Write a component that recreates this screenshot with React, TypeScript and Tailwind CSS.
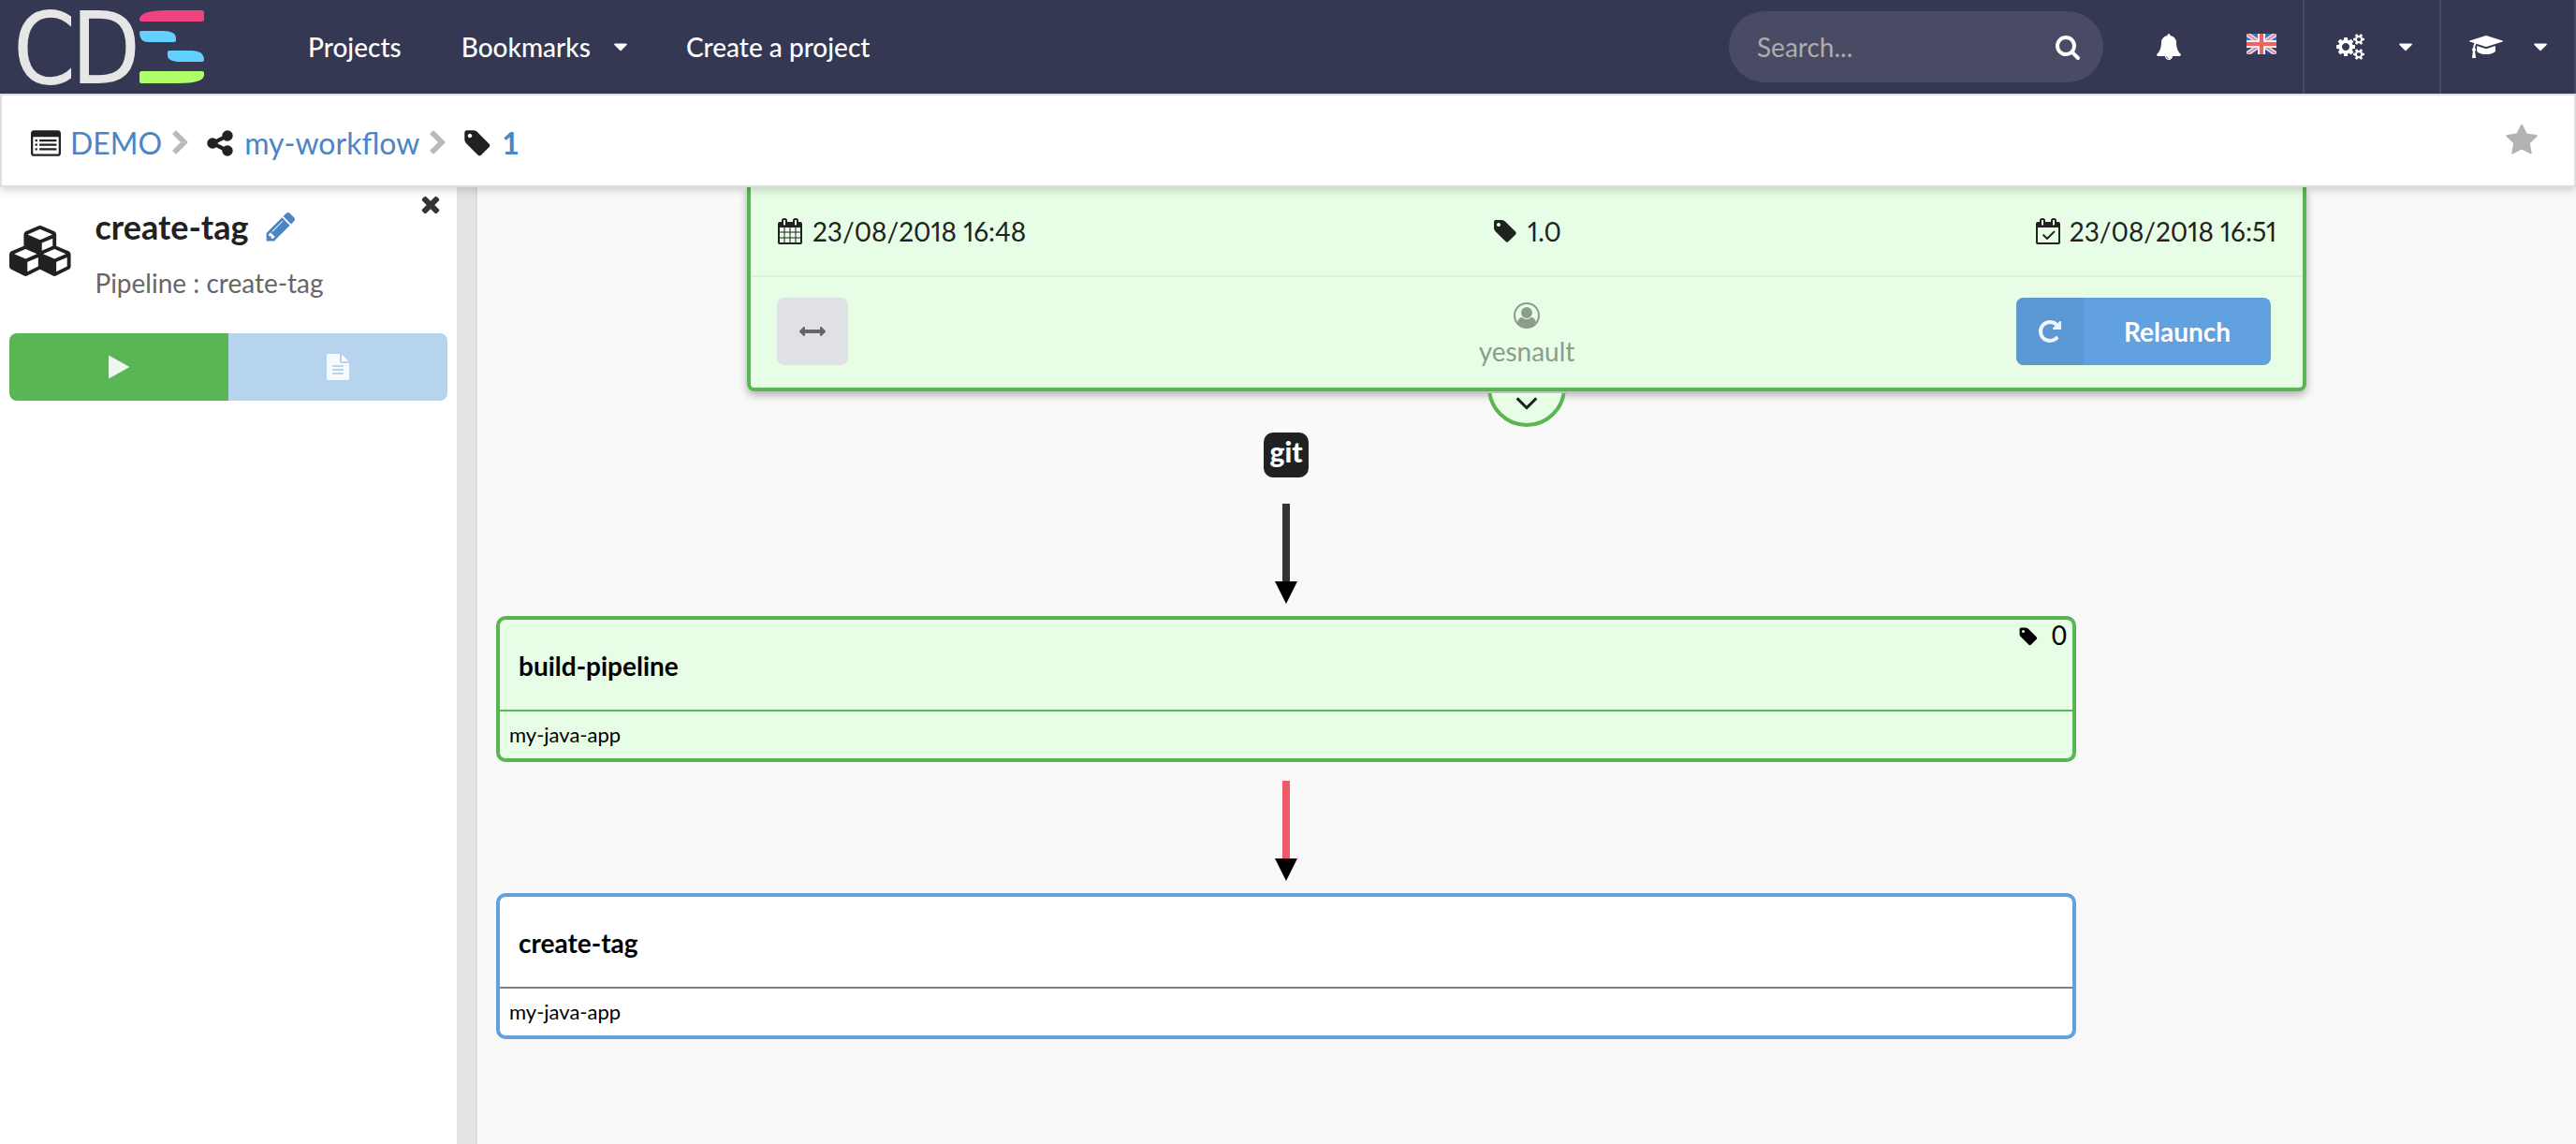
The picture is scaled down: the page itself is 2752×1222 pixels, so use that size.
import React from 'react';

const paths = {
  bell: 'M912 1696q0-16-16-16-59 0-101.5-42.5t-42.5-101.5q0-16-16-16t-16 16q0 73 51.5 124.5t124.5 51.5q16 0 16-16zm816-288q0 52-38 90t-90 38h-448q0 106-75 181t-181 75-181-75-75-181h-448q-52 0-90-38t-38-90q50-42 91-88t85-119.5 74.5-158.5 50-206 19.5-260q0-152 117-282.5t307-158.5q-8-19-8-39 0-40 28-68t68-28 68 28 28 68q0 20-8 39 190 28 307 158.5t117 282.5q0 139 19.5 260t50 206 74.5 158.5 85 119.5 91 88z',
  search: 'M1216 832q0-185-131.5-316.5t-316.5-131.5-316.5 131.5-131.5 316.5 131.5 316.5 316.5 131.5 316.5-131.5 131.5-316.5zm512 832q0 52-38 90t-90 38q-54 0-90-38l-343-342q-179 124-399 124-143 0-273.5-55.5t-225-150-150-225-55.5-273.5 55.5-273.5 150-225 225-150 273.5-55.5 273.5 55.5 225 150 150 225 55.5 273.5q0 220-124 399l343 343q37 37 37 90z',
  caret: 'M1408 704q0 26-19 45l-448 448q-19 19-45 19t-45-19l-448-448q-19-19-19-45t19-45 45-19h896q26 0 45 19t19 45z',
  cogs: 'M896 896q0-106-75-181t-181-75-181 75-75 181 75 181 181 75 181-75 75-181zm768 512q0-52-38-90t-90-38-90 38-38 90q0 53 37.5 90.5t90.5 37.5 90.5-37.5 37.5-90.5zm0-1024q0-52-38-90t-90-38-90 38-38 90q0 53 37.5 90.5t90.5 37.5 90.5-37.5 37.5-90.5zm-384 421v185q0 10-7 19.5t-16 10.5l-155 24q-11 35-32 76 34 48 90 115 7 11 7 20 0 12-7 19-23 30-82.5 89.5t-78.5 59.5q-11 0-21-7l-115-90q-37 19-77 31-11 108-23 155-7 24-30 24h-186q-11 0-20-7.5t-10-17.5l-23-153q-34-10-75-31l-118 89q-7 7-20 7-11 0-21-8-144-133-144-160 0-9 7-19 10-14 41-53t47-61q-23-44-35-82l-152-24q-10-1-17-9.5t-7-19.5v-185q0-10 7-19.5t16-10.5l155-24q11-35 32-76-34-48-90-115-7-11-7-20 0-12 7-20 22-30 82-89t79-59q11 0 21 7l115 90q34-18 77-32 11-108 23-154 7-24 30-24h186q11 0 20 7.5t10 17.5l23 153q34 10 75 31l118-89q8-7 20-7 11 0 21 8 144 133 144 160 0 8-7 19-12 16-42 54t-45 60q23 48 34 82l152 23q10 2 17 10.5t7 19.5zm640 533v140q0 16-149 31-12 27-30 52 51 113 51 138 0 4-4 7-122 71-124 71-8 0-46-47t-52-68q-20 2-30 2t-30-2q-14 21-52 68t-46 47q-2 0-124-71-4-3-4-7 0-25 51-138-18-25-30-52-149-15-149-31v-140q0-16 149-31 13-29 30-52-51-113-51-138 0-4 4-7 4-2 35-20t59-34 30-16q8 0 46 46.5t52 67.5q20-2 30-2t30 2q51-71 92-112l6-2q4 0 124 70 4 3 4 7 0 25-51 138 17 23 30 52 149 15 149 31zm0-1024v140q0 16-149 31-12 27-30 52 51 113 51 138 0 4-4 7-122 71-124 71-8 0-46-47t-52-68q-20 2-30 2t-30-2q-14 21-52 68t-46 47q-2 0-124-71-4-3-4-7 0-25 51-138-18-25-30-52-149-15-149-31v-140q0-16 149-31 13-29 30-52-51-113-51-138 0-4 4-7 4-2 35-20t59-34 30-16q8 0 46 46.5t52 67.5q20-2 30-2t30 2q51-71 92-112l6-2q4 0 124 70 4 3 4 7 0 25-51 138 17 23 30 52 149 15 149 31z',
  cap: 'M1774 836l18 316q4 69-82 128t-235 93.5-323 34.5-323-34.5-235-93.5-82-128l18-316 574 181q22 7 48 7t48-7zm530-324q0 23-22 31l-1120 352q-4 1-10 1t-10-1l-652-206q-43 34-71 111.5t-34 178.5q63 36 63 109 0 69-58 107l58 433q2 14-8 25-9 11-24 11h-192q-15 0-24-11-10-11-8-25l58-433q-58-38-58-107 0-73 65-111 11-207 98-330l-333-104q-22-8-22-31t22-31l1120-352q4-1 10-1t10 1l1120 352q22 8 22 31z',
  star: 'M1728 647q0 22-26 48l-363 354 86 500q1 7 1 20 0 21-10.5 35.5t-30.5 14.5q-19 0-40-12l-449-236-449 236q-22 12-40 12-21 0-31.5-14.5t-10.5-35.5q0-6 2-20l86-500-364-354q-25-27-25-48 0-37 56-46l502-73 225-455q19-41 49-41t49 41l225 455 502 73q56 9 56 46z',
  listAlt: 'M160 128h1472q66 0 113 47t47 113v1216q0 66-47 113t-113 47h-1472q-66 0-113-47t-47-113v-1216q0-66 47-113t113-47zm0 384q-32 0-32 32v960q0 32 32 32h1472q32 0 32-32v-960q0-32-32-32zM256 672h128v128h-128zm0 256h128v128h-128zm0 256h128v128h-128zM512 672h1024v128h-1024zm0 256h1024v128h-1024zm0 256h1024v128h-1024z',
  chevron: 'M1363 877l-742 742q-19 19-45 19t-45-19l-166-166q-19-19-19-45t19-45l531-531-531-531q-19-19-19-45t19-45l166-166q19-19 45-19t45 19l742 742q19 19 19 45t-19 45z',
  share: 'M1344 1024q133 0 226.5 93.5t93.5 226.5-93.5 226.5-226.5 93.5-226.5-93.5-93.5-226.5q0-12 2-34l-360-180q-92 86-218 86-133 0-226.5-93.5t-93.5-226.5 93.5-226.5 226.5-93.5q126 0 218 86l360-180q-2-22-2-34 0-133 93.5-226.5t226.5-93.5 226.5 93.5 93.5 226.5-93.5 226.5-226.5 93.5q-126 0-218-86l-360 180q2 22 2 34t-2 34l360 180q92-86 218-86z',
  tag: 'M576 448q0-53-37.5-90.5t-90.5-37.5-90.5 37.5-37.5 90.5 37.5 90.5 90.5 37.5 90.5-37.5 37.5-90.5zm1067 576q0 53-37 90l-491 492q-39 37-91 37-53 0-90-37l-715-716q-38-37-64.5-101t-26.5-117v-416q0-52 38-90t90-38h416q53 0 117 26.5t102 64.5l715 714q37 39 37 91z',
  cubes: 'M640 1632l384-192v-314l-384 164v342zm-64-454l404-173-404-173-404 173zm1088 454l384-192v-314l-384 164v342zm-64-454l404-173-404-173-404 173zm-448-293l384-165v-266l-384 164v267zm-64-379l441-189-441-189-441 189zm1088 518v416q0 36-19 67t-52 47l-448 224q-25 14-57 14t-57-14l-448-224q-4-2-7-4-2 2-7 4l-448 224q-25 14-57 14t-57-14l-448-224q-33-16-52-47t-19-67v-416q0-38 21.5-70t56.5-48l434-186v-400q0-38 21.5-70t56.5-48l448-192q23-10 50-10t50 10l448 192q35 16 56.5 48t21.5 70v400l434 186q36 16 57 48t21 70z',
  pencil: 'M491 1536l91-91-235-235-91 91v107h128v128h107zm523-928q0-22-22-22-10 0-17 7l-542 542q-7 7-7 17 0 22 22 22 10 0 17-7l542-542q7-7 7-17zm-54-192l416 416-832 832h-416v-416zm683 96q0 53-37 90l-166 166-416-416 166-165q36-38 90-38 53 0 91 38l235 234q37 39 37 91z',
  close: 'M1490 1322q0 40-28 68l-136 136q-28 28-68 28t-68-28l-294-294-294 294q-28 28-68 28t-68-28l-136-136q-28-28-28-68t28-68l294-294-294-294q-28-28-28-68t28-68l136-136q28-28 68-28t68 28l294 294 294-294q28-28 68-28t68 28l136 136q28 28 28 68t-28 68l-294 294 294 294q28 28 28 68z',
  play: 'M1576 927l-1328 738q-23 13-39.5 3t-16.5-36v-1472q0-26 16.5-36t39.5 3l1328 738q23 13 23 31t-23 31z',
  file: 'M1596 476q14 14 28 36h-472v-472q22 14 36 28zm-476 164h544v1056q0 40-28 68t-68 28h-1344q-40 0-68-28t-28-68v-1600q0-40 28-68t68-28h800v544q0 40 28 68t68 28zm160 736v-64q0-14-9-23t-23-9h-704q-14 0-23 9t-9 23v64q0 14 9 23t23 9h704q14 0 23-9t9-23zm0-256v-64q0-14-9-23t-23-9h-704q-14 0-23 9t-9 23v64q0 14 9 23t23 9h704q14 0 23-9t9-23zm0-256v-64q0-14-9-23t-23-9h-704q-14 0-23 9t-9 23v64q0 14 9 23t23 9h704q14 0 23-9t9-23z',
  calendar: 'M192 1664h288v-288h-288v288zm352 0h320v-288h-320v288zm-352-352h288v-320h-288v320zm352 0h320v-320h-320v320zm-352-384h288v-288h-288v288zm736 736h320v-288h-320v288zm-384-736h320v-288h-320v288zm768 736h288v-288h-288v288zm-384-352h320v-320h-320v320zm-352-864v-288q0-13-9.5-22.5t-22.5-9.5h-64q-13 0-22.5 9.5t-9.5 22.5v288q0 13 9.5 22.5t22.5 9.5h64q13 0 22.5-9.5t9.5-22.5zm736 864h288v-320h-288v320zm-384-384h320v-288h-320v288zm384 0h288v-288h-288v288zm32-480v-288q0-13-9.5-22.5t-22.5-9.5h-64q-13 0-22.5 9.5t-9.5 22.5v288q0 13 9.5 22.5t22.5 9.5h64q13 0 22.5-9.5t9.5-22.5zm384-64v1280q0 52-38 90t-90 38h-1408q-52 0-90-38t-38-90v-1280q0-52 38-90t90-38h128v-96q0-66 47-113t113-47h64q66 0 113 47t47 113v96h384v-96q0-66 47-113t113-47h64q66 0 113 47t47 113v96h128q52 0 90 38t38 90z',
  calendarCheck: 'M1303 964l-512 512q-10 9-23 9t-23-9l-288-288q-9-10-9-23t9-22l46-46q9-9 22-9t23 9l220 220 444-444q10-9 23-9t22 9l46 46q9 9 9 22t-9 23zm-1175 700h1408v-1024h-1408v1024zm384-1216v-288q0-14-9-23t-23-9h-64q-14 0-23 9t-9 23v288q0 14 9 23t23 9h64q14 0 23-9t9-23zm768 0v-288q0-14-9-23t-23-9h-64q-14 0-23 9t-9 23v288q0 14 9 23t23 9h64q14 0 23-9t9-23zm384-64v1280q0 52-38 90t-90 38h-1408q-52 0-90-38t-38-90v-1280q0-52 38-90t90-38h128v-96q0-66 47-113t113-47h64q66 0 113 47t47 113v96h384v-96q0-66 47-113t113-47h64q66 0 113 47t47 113v96h128q52 0 90 38t38 90z',
  repeat: 'M1664 256v448q0 26-19 45t-45 19h-448q-42 0-59-40-17-39 14-69l138-138q-148-137-349-137-104 0-198.5 40.5t-163.5 109.5-109.5 163.5-40.5 198.5 40.5 198.5 109.5 163.5 163.5 109.5 198.5 40.5q119 0 225-52t179-147q7-10 23-12 15 0 25 9l137 138q9 8 9.5 20.5t-7.5 22.5q-109 132-264 204.5t-327 72.5q-156 0-298-61t-245-164-164-245-61-298 61-298 164-245 245-164 298-61q147 0 284.5 55.5t244.5 156.5l130-129q29-31 70-14 39 17 39 59z',
  arrows: 'M1792 896q0 26-19 45l-256 256q-19 19-45 19t-45-19-19-45v-128h-1024v128q0 26-19 45t-45 19-45-19l-256-256q-19-19-19-45t19-45l256-256q19-19 45-19t45 19 19 45v128h1024v-128q0-26 19-45t45-19 45 19l256 256q19 19 19 45z',
  user: 'M896 0q182 0 348 71t286 191 191 286 71 348q0 181-70.5 347t-190.5 286-286 191.5-349 71.5-349-71-285.5-191.5-190.5-286-71-347.5 71-348 191-286 286-191 348-71zm619 1351q149-205 149-455 0-156-61-298t-164-245-245-164-298-61-298 61-245 164-164 245-61 298q0 250 149 455 66-327 306-327 131 128 313 128t313-128q240 0 306 327zm-235-647q0-159-112.5-271.5t-271.5-112.5-271.5 112.5-112.5 271.5 112.5 271.5 271.5 112.5 271.5-112.5 112.5-271.5z',
  angleDown: 'M1395 736q0 13-10 23l-466 466q-10 10-23 10t-23-10l-466-466q-10-10-10-23t10-23l50-50q10-10 23-10t23 10l393 393 393-393q10-10 23-10t23 10l50 50q10 10 10 23z',
};

type IconName = keyof typeof paths;

function Icon({ name, width = 1792, className = 'h-7' }: { name: IconName; width?: number; className?: string }) {
  return (
    <svg
      viewBox={`0 0 ${width} 1792`}
      fill="currentColor"
      fillRule={name === 'listAlt' ? 'evenodd' : 'nonzero'}
      className={`shrink-0 overflow-visible ${className}`}
      aria-hidden="true"
    >
      <path d={paths[name]} />
    </svg>
  );
}

function Logo() {
  return (
    <svg viewBox="0 0 220 100" className="h-[100px] w-[220px] overflow-visible" role="img" aria-label="CDS">
      <g fill="#e6e6e6" fontFamily="'DejaVu Sans Condensed', 'DejaVu Sans', sans-serif" fontSize="107">
        <text x="14" y="89">C</text>
        <text x="76" y="89">D</text>
      </g>
      <path d="M149 21q0-10 29-10h38q2 0 2 2v8q0 2-2 2h-65q-2 0-2-2z" fill="#ef427f" />
      <path d="M149 35q0-2 2-2h23q14 0 14 8v2q0 2-2 2h-27q-10 0-10-10z" fill="#63d0ff" />
      <path d="M179 56q0-2 2-2h23q14 0 14 10q0 2-2 2h-23q-14 0-14-7z" fill="#63d0ff" />
      <path d="M149 79q0-3 2-3h65q2 0 2 2v2q0 9-28 9h-39q-2 0-2-2z" fill="#aeff68" />
    </svg>
  );
}

function Flag() {
  return (
    <svg viewBox="0 0 32 22" className="h-[22px] w-8" aria-hidden="true">
      <rect width="32" height="22" fill="#4a6fb8" />
      <rect y="11" width="32" height="11" fill="#2c4691" />
      <path d="M0 0L32 22M32 0L0 22" stroke="#e6e6f2" strokeWidth="5" />
      <path d="M0 0L32 22M32 0L0 22" stroke="#e58a8f" strokeWidth="2" />
      <path d="M16 0V22M0 11H32" stroke="#fbeeee" strokeWidth="8" />
      <path d="M16 0V22M0 11H32" stroke="#ec6360" strokeWidth="4" />
    </svg>
  );
}

function Header() {
  return (
    <header className="flex h-[100px] items-center bg-[#343852] text-[28px] leading-9 text-white">
      <a href="#home"><Logo /></a>
      <nav className="ml-[109px] flex items-center font-medium">
        <a href="#projects">Projects</a>
        <button type="button" className="ml-16 flex items-center gap-5">
          Bookmarks <Icon name="caret" className="h-6" />
        </button>
        <a href="#create" className="ml-[58px]">Create a project</a>
      </nav>
      <div className="ml-auto flex h-full items-center">
        <form className="flex h-[76px] w-[400px] items-center rounded-full bg-[#484b63] pr-6 pl-[30px]" onSubmit={(e) => e.preventDefault()}>
          <input
            type="text"
            aria-label="Search"
            placeholder="Search..."
            className="min-w-0 flex-1 bg-transparent leading-9 outline-none placeholder:text-[#adadad]"
          />
          <button type="submit" aria-label="Search"><Icon name="search" /></button>
        </form>
        <button type="button" aria-label="Notifications" className="ml-14"><Icon name="bell" /></button>
        <button type="button" aria-label="Language" className="mr-7 mb-1.5 ml-[69px]"><Flag /></button>
        <button type="button" aria-label="Settings" className="flex h-full w-[146px] items-center justify-between border-l-2 border-[#484b63] pr-6 pl-[34px]">
          <Icon name="cogs" width={1920} /> <Icon name="caret" className="h-6" />
        </button>
        <button type="button" aria-label="Help" className="flex h-full w-[146px] items-center justify-between border-x-2 border-[#484b63] pr-6 pl-[30px]">
          <Icon name="cap" width={2304} /> <Icon name="caret" className="h-6" />
        </button>
      </div>
    </header>
  );
}

function Breadcrumb() {
  return (
    <div className="relative z-10 flex h-[100px] items-center border-2 border-[#dedede] bg-white pr-[38px] pl-[31px] text-[32px] leading-10 text-[#4c84c4] shadow-[0_4px_8px_rgba(0,0,0,0.15)]">
      <nav aria-label="Breadcrumb" className="flex items-center pt-1.5">
        <Icon name="listAlt" className="h-8 text-[#212121]" />
        <a href="#demo" className="ml-2.5">DEMO</a>
        <Icon name="chevron" className="mx-1.5 h-7 text-[#b9b9b9]" />
        <Icon name="share" className="ml-1.5 h-8 text-[#212121]" />
        <a href="#workflow" className="ml-2.5">my-workflow</a>
        <Icon name="chevron" className="mx-1.5 h-7 text-[#b9b9b9]" />
        <Icon name="tag" className="ml-1.5 h-8 text-[#212121]" />
        <a href="#run" className="ml-2.5 font-bold">1</a>
      </nav>
      <button type="button" aria-label="Add to favourites" className="ml-auto text-[#b3b3b3]"><Icon name="star" className="h-9" /></button>
    </div>
  );
}

function Sidebar() {
  return (
    <aside className="relative w-[488px] shrink-0 bg-white px-2.5 pt-[22px]">
      <button type="button" aria-label="Close" className="absolute top-1 right-3.5 text-[#333]"><Icon name="close" className="h-7" /></button>
      <div className="flex items-center">
        <Icon name="cubes" width={2304} className="mb-2 h-[54px]" />
        <div className="ml-[22px]">
          <h2 className="flex items-center gap-4 text-[36px] leading-10 font-bold text-[#212121]">
            create-tag
            <button type="button" aria-label="Edit" className="text-[#4c84c4]"><Icon name="pencil" className="h-9" /></button>
          </h2>
          <p className="mt-5 text-[28px] leading-10 text-[#666]">Pipeline : create-tag</p>
        </div>
      </div>
      <div className="mt-[34px] flex h-[72px] overflow-hidden rounded-lg text-white">
        <button type="button" aria-label="Run" className="flex flex-1 items-center justify-center bg-[#5ab655] text-white/90"><Icon name="play" /></button>
        <button type="button" aria-label="Logs" className="flex flex-1 items-center justify-center bg-[#b7d4ee] text-white/90"><Icon name="file" /></button>
      </div>
    </aside>
  );
}

function RunCard() {
  return (
    <section className="relative mx-72 rounded-b-lg border-4 border-t-0 border-[#5ab655] bg-[#e8fde5] text-[28px] leading-9 text-[#212121] shadow-[0_4px_10px_rgba(0,0,0,0.3)]">
      <div className="grid h-24 grid-cols-3 items-center border-b-2 border-[#dcf0da] px-7 proportional-nums">
        <span className="flex items-center gap-2.5"><Icon name="calendar" /> 23/08/2018 16:48</span>
        <span className="flex items-center justify-center gap-2.5"><Icon name="tag" /> 1.0</span>
        <span className="flex items-center justify-end gap-2.5"><Icon name="calendarCheck" width={1664} /> 23/08/2018 16:51</span>
      </div>
      <div className="grid h-[118px] grid-cols-3 items-center px-7 pb-0.5">
        <button type="button" aria-label="Fit width" className="flex h-[72px] w-[76px] items-center justify-center rounded-lg bg-[#dfe1e4] text-[#666]"><Icon name="arrows" /></button>
        <span className="flex flex-col items-center pt-2 text-[#8e9c8c]">
          <Icon name="user" /> <span className="mt-1.5">yesnault</span>
        </span>
        <button type="button" className="mr-1.5 flex h-[72px] w-[272px] items-stretch justify-self-end overflow-hidden rounded-lg bg-[#62a1e0] font-bold text-white">
          <span className="flex w-[72px] items-center justify-center bg-[#5c98d3] text-white/90"><Icon name="repeat" /></span>
          <span className="flex flex-1 items-center justify-center">Relaunch</span>
        </button>
      </div>
      <button type="button" aria-label="Expand" className="absolute top-full left-1/2 mt-1.5 flex h-9 -translate-x-1/2 items-end overflow-hidden">
        <span className="flex size-[84px] items-end justify-center rounded-full border-4 border-[#5ab655] bg-[#e8fde5]">
          <Icon name="angleDown" className="mb-0.5 h-10" />
        </span>
      </button>
    </section>
  );
}

function GitIcon() {
  return (
    <span className="flex size-12 items-center justify-center rounded-[10px] bg-[#212121] pb-2 text-[30px] leading-8 font-black text-white">
      git
    </span>
  );
}

function Arrow({ stem }: { stem: string }) {
  return (
    <svg viewBox="0 0 24 108" className="h-[108px] w-6" aria-hidden="true">
      <rect x="8" width="8" height="84" fill={stem} />
      <path d="M0 83h24L12 107z" fill="#000" />
    </svg>
  );
}

function Node({ title, app, version, success }: { title: string; app: string; version?: string; success?: boolean }) {
  return (
    <article className={`relative w-full rounded-[10px] border-4 text-black ${success ? 'border-[#5ab655] bg-[#e8fde5]' : 'border-[#62a1e0] bg-white'}`}>
      {version && (
        <span className="absolute top-0 right-1.5 flex items-center gap-3.5 text-[28px] leading-8"><Icon name="tag" className="mt-1 h-[22px]" /> {version}</span>
      )}
      <h3 className={`flex h-[98px] items-center border-b-2 px-5 pt-0.5 text-[28px] leading-9 font-bold ${success ? 'border-[#5ab655]' : 'border-[#808080]'}`}>{title}</h3>
      <p className="flex h-[50px] items-center px-2.5 text-[22px] leading-7">{app}</p>
    </article>
  );
}

export default function App() {
  return (
    <div className="flex h-screen flex-col overflow-hidden bg-white font-['Lato',sans-serif] text-[#212121]">
      <Header />
      <Breadcrumb />
      <div className="flex min-h-0 flex-1">
        <Sidebar />
        <div className="w-[22px] shrink-0 border-r-2 border-[#dcdcdc] bg-[#e4e4e4]" />
        <main className="min-w-0 flex-1 overflow-hidden bg-[#f9f9f9]">
          <RunCard />
          <div className="mt-11 flex flex-col items-center pr-[534px] pl-5">
            <GitIcon />
            <div className="mt-7 mb-3 h-[108px]"><Arrow stem="#333333" /></div>
            <Node title="build-pipeline" app="my-java-app" version="0" success />
            <div className="mt-5 mb-3 h-[108px]"><Arrow stem="#ed5c66" /></div>
            <Node title="create-tag" app="my-java-app" />
          </div>
        </main>
      </div>
    </div>
  );
}
